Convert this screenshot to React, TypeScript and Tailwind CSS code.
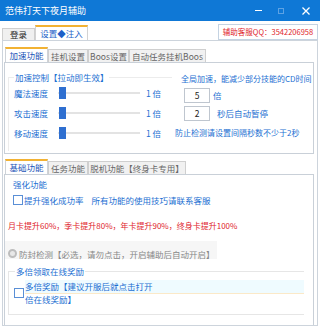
import React from 'react';

const BLUE = 'text-[#1c6fd2]';

function Slider({ label }: { label: string }) {
  return (
    <div className="flex h-[20px] items-center">
      <span className={`w-[44px] shrink-0 ${BLUE}`}>{label}</span>
      <div className="relative flex h-[12px] w-[82px] shrink-0 items-center">
        <div className="h-[2px] w-full bg-[#e3e3e3]" />
        <div className="absolute left-[1px] top-0 h-[12px] w-[7px] bg-[#2f6fd0]" />
      </div>
      <span className={`ml-[6px] shrink-0 ${BLUE}`}>1 倍</span>
    </div>
  );
}

function Tab({ label, active, w }: { label: string; active?: boolean; w: string }) {
  return active ? (
    <div
      className={`${w} flex h-[15px] shrink-0 items-center justify-center border-x border-t-2 border-[#cfd3d8] border-t-[#f2b233] bg-white text-[#1a55b8]`}
    >
      {label}
    </div>
  ) : (
    <div
      className={`${w} flex h-[13px] shrink-0 items-center justify-center border border-b-0 border-[#cfcfcf] bg-[#f1f1f1] text-[#666]`}
    >
      {label}
    </div>
  );
}

function Check() {
  return <div className="h-[10px] w-[10px] shrink-0 border border-[#5a8fd6] bg-white" />;
}

export default function App() {
  return (
    <div
      className="h-[330px] w-[320px] overflow-hidden whitespace-nowrap bg-white text-[8.5px] leading-none"
      style={{ fontFamily: '"Noto Sans CJK SC", "Noto Sans", sans-serif' }}
    >
      {/* title bar */}
      <div className="flex h-[21px] items-center bg-[#0f78d6] pl-[5px] text-[9px] text-white">
        <span className="flex-1">范伟打天下夜月辅助</span>
        <div className="mr-[16px] h-px w-[7px] bg-white" />
        <div className="mr-[18px] h-[6px] w-[6px] border border-[#5da2e4]" />
        <svg width="8" height="8" viewBox="0 0 8 8" className="mr-[10px]">
          <path d="M0.5 0.5 L7.5 7.5 M7.5 0.5 L0.5 7.5" stroke="white" strokeWidth="1.3" />
        </svg>
      </div>

      {/* top tabs */}
      <div className="flex h-[19px] items-end pl-[2px]">
        <div className="flex h-[12px] w-[33px] items-center justify-center border border-b-0 border-[#cfcfcf] bg-[#f0f0f0] text-[#222]">
          登录
        </div>
        <div className="flex h-[15px] w-[53px] items-center justify-center border-x border-t-2 border-[#d3d3d3] border-t-[#f2b233] bg-white text-[#1c5fc8]">
          设置◆注入
        </div>
        <div className="flex-1" />
        <div className="mr-[2px] flex h-[16px] w-[100px] items-center justify-center overflow-hidden border border-[#c5d3e2] text-[7.5px] text-[#e0232b]">
          辅助客服QQ：3542206958
        </div>
      </div>

      {/* main panel */}
      <div className="ml-[2px] flex h-[286px] w-[316px] flex-col border border-[#cdd4dc] pl-[1px] pt-[6px]">
        <div className="flex items-end pl-[1px]">
          <Tab label="加速功能" active w="w-[43px]" />
          <Tab label="挂机设置" w="w-[40px]" />
          <Tab label="Boos设置" w="w-[41px]" />
          <Tab label="自动任务挂机Boos" w="w-[77px]" />
        </div>

        {/* panel 1 */}
        <div className="flex h-[92px] w-[310px] border border-[#c9d0d8]">
          <div className="ml-[3px] mt-[14px] h-[74px] w-[164px] shrink-0 border-l border-t border-[#ececec] pl-[5px]">
            <div className={`-mt-[5px] h-[10px] w-max bg-white pl-px ${BLUE}`}>加速控制【拉动即生效】</div>
            <Slider label="魔法速度" />
            <Slider label="攻击速度" />
            <Slider label="移动速度" />
          </div>
          <div className="flex flex-col pl-[3px] pt-[12px]">
            <div className={`ml-[6px] h-[10px] text-[8px] ${BLUE}`}>全局加速，能减少部分技能的CD时间</div>
            <div className="ml-[9px] mt-[3px] flex items-center">
              <div className="flex h-[15px] w-[26px] items-center justify-center border border-[#bfc6cf] text-[#222]">5</div>
              <span className={`ml-[3px] ${BLUE}`}>倍</span>
            </div>
            <div className="ml-[9px] mt-[3px] flex items-center">
              <div className="flex h-[15px] w-[26px] items-center justify-center border border-[#bfc6cf] text-[#222]">2</div>
              <span className={`ml-[7px] ${BLUE}`}>秒后自动暂停</span>
            </div>
            <div className={`mt-[8px] text-[8px] ${BLUE}`}>防止检测请设置间隔秒数不少于2秒</div>
          </div>
        </div>

        {/* second tabs */}
        <div className="mt-[5px] flex items-end pl-[1px]">
          <Tab label="基础功能" active w="w-[43px]" />
          <Tab label="任务功能" w="w-[40px]" />
          <Tab label="脱机功能【终身卡专用】" w="w-[98px]" />
        </div>

        {/* panel 2 */}
        <div className="flex w-[310px] flex-1 flex-col border border-b-0 border-[#c9d0d8]">
          <div className={`ml-[8px] mt-[5px] h-[10px] ${BLUE}`}>强化功能</div>
          <div className="ml-[8px] mt-[5px] flex h-[10px] items-center">
            <Check />
            <span className={`ml-[1px] ${BLUE}`}>提升强化成功率</span>
            <span className={`ml-[8px] ${BLUE}`}>所有功能的使用技巧请联系客服</span>
          </div>
          <div className="ml-[3px] mt-[17px] h-[10px] text-[8px] text-[#e0232b]">
            月卡提升60%，季卡提升80%，年卡提升90%，终身卡提升100%
          </div>
          <div className="mt-[9px] flex h-[18px] w-[212px] items-end bg-[#f6f6f6] pb-[1px] pl-[3px] text-[#888]">
            <div className="mr-[2px] h-[9px] w-[9px] shrink-0 rounded-full border-2 border-[#bdbdbd] bg-[#e8e8e8]" />
            防封检测【必选，请勿点击，开启辅助后自动开启】
          </div>
          <div className="ml-[3px] mt-[12px] flex h-[44px] w-[296px] flex-col border-b border-l border-t border-[#e6e6e6]">
            <div className={`-mt-[5px] ml-[6px] w-max bg-white px-px ${BLUE}`}>多倍领取在线奖励</div>
            <div className="mt-[4px] flex items-center pl-[5px]">
              <Check />
              <div className={`ml-[1px] flex flex-1 flex-col ${BLUE}`}>
                <div className="flex h-[13px] items-center bg-[#effbff]">多倍奖励【建议开服后就点击打开</div>
                <div className="h-px bg-[#fbe9c8]" />
                <div className="flex h-[12px] items-center">倍在线奖励】</div>
              </div>
            </div>
          </div>
        </div>
      </div>
    </div>
  );
}
